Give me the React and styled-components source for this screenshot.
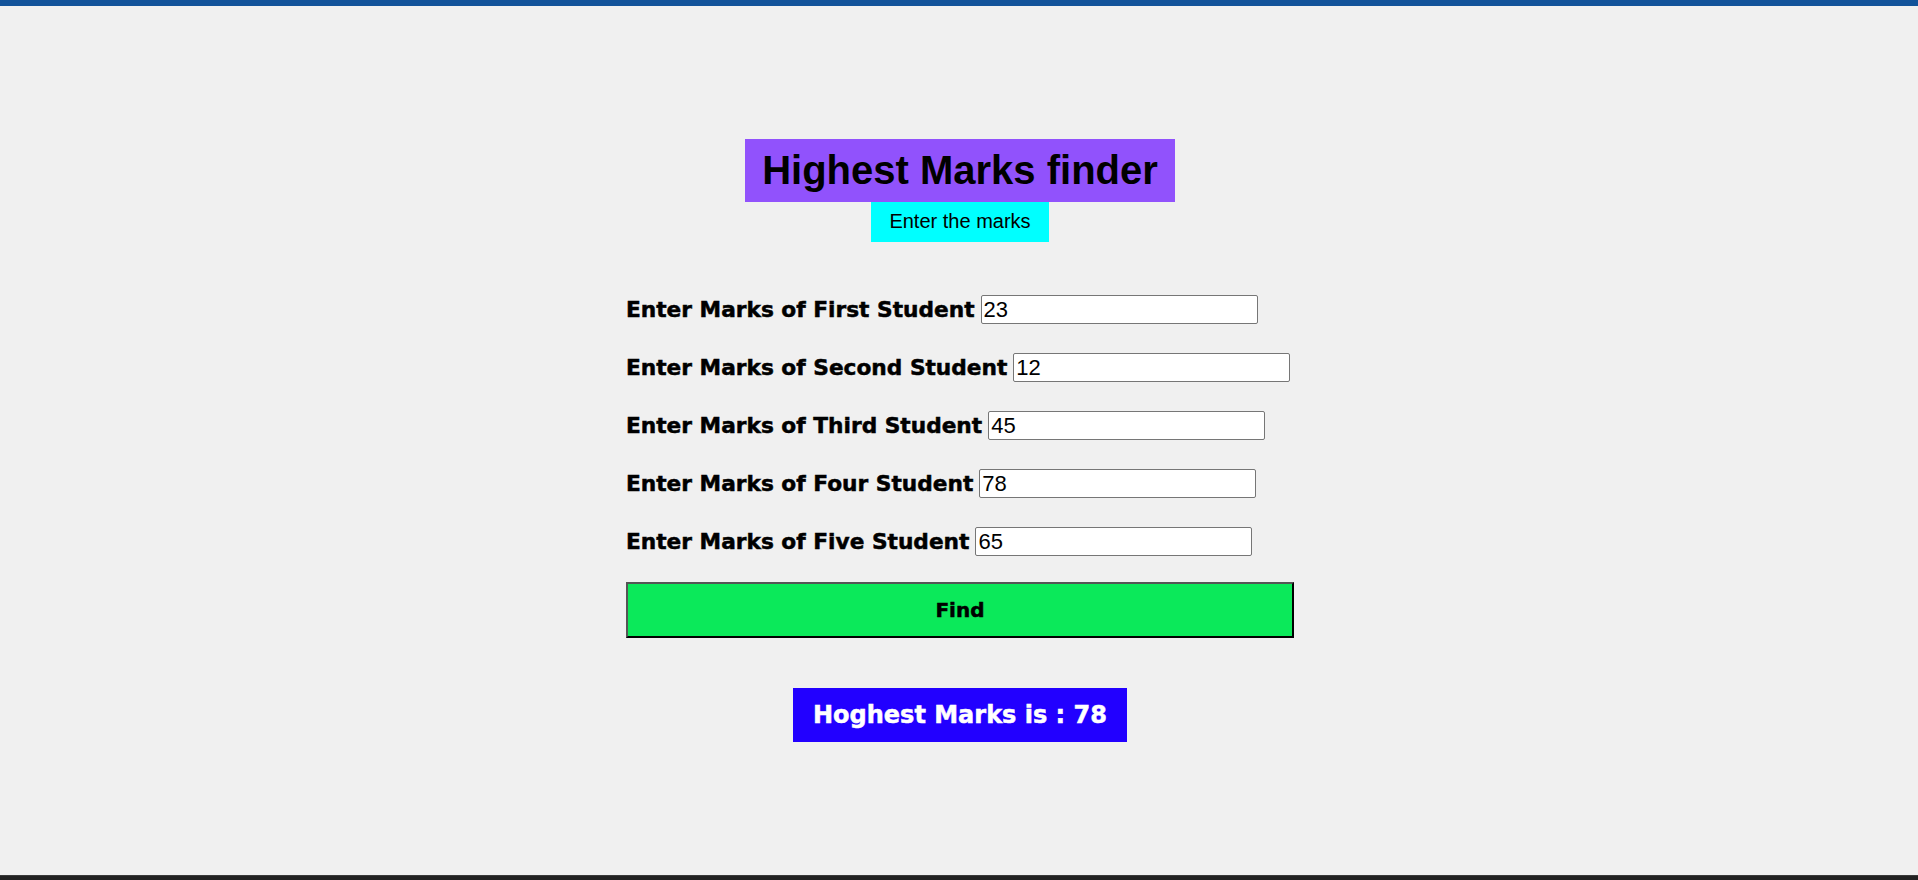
import React, { useState } from 'react';
import styled, { createGlobalStyle } from 'styled-components';

const GlobalStyle = createGlobalStyle`
  html, body {
    margin: 0;
    padding: 0;
    background-color: #f0f0f0;
  }
`;

const Page = styled.div`
  min-height: 100vh;
  display: flex;
  flex-direction: column;
  background-color: #f0f0f0;
`;

const TopBar = styled.div`
  height: 6px;
  background-color: #12539a;
`;

const BottomBar = styled.div`
  height: 4px;
  background-color: #222222;
  border-top: 1px solid #3a3a3a;
`;

const Main = styled.main`
  flex: 1;
  display: flex;
  flex-direction: column;
  align-items: center;
  padding-top: 133px;
  padding-left: 2px;
`;

const Title = styled.h1`
  margin: 0;
  padding: 8px 17px 9px;
  background-color: #9152fc;
  color: #000;
  font-family: 'Liberation Sans', Arial, sans-serif;
  font-size: 40px;
  font-weight: bold;
  line-height: 46px;
`;

const Subtitle = styled.p`
  margin: 0;
  padding: 8px 18px 9px;
  background-color: #00ffff;
  color: #000;
  font-family: 'Liberation Sans', Arial, sans-serif;
  font-size: 20px;
  line-height: 23px;
`;

const Form = styled.form`
  width: 668px;
  margin-top: 53px;
  display: flex;
  flex-direction: column;
`;

const Fields = styled.div`
  display: flex;
  flex-direction: column;
  gap: 29px;
`;

const Row = styled.div`
  display: flex;
  align-items: center;
  gap: 6px;
`;

const Heavy = `
  font-family: 'DejaVu Sans', sans-serif;
  font-weight: bold;
  -webkit-text-stroke: 0.5px currentColor;
`;

const Label = styled.label`
  ${Heavy}
  font-size: 21.7px;
  color: #000;
  white-space: nowrap;
`;

const Input = styled.input`
  box-sizing: border-box;
  width: 277px;
  height: 29px;
  padding: 1px 2px;
  border: 1px solid #767676;
  border-radius: 2px;
  background: #fff;
  font-family: 'Liberation Sans', Arial, sans-serif;
  font-size: 22px;
  color: #000;
  outline: none;
`;

const FindButton = styled.button`
  ${Heavy}
  box-sizing: border-box;
  margin-top: 26px;
  width: 100%;
  height: 56px;
  background-color: #0be95a;
  border-style: solid;
  border-width: 2px;
  border-color: #555555 #000000 #000000 #555555;
  font-size: 20px;
  color: #000;
  cursor: pointer;
`;

const Result = styled.div`
  ${Heavy}
  margin-top: 50px;
  padding: 13px 20px;
  background-color: #2200ff;
  color: #fff;
  font-size: 24px;
  line-height: 28px;
`;

const students = ['First', 'Second', 'Third', 'Four', 'Five'];

const App = () => {
  const [marks, setMarks] = useState(['23', '12', '45', '78', '65']);
  const [highest, setHighest] = useState(78);

  const handleChange = (index, value) => {
    const next = [...marks];
    next[index] = value;
    setMarks(next);
  };

  const handleFind = (e) => {
    e.preventDefault();
    const nums = marks.map((m) => Number(m) || 0);
    setHighest(Math.max(...nums));
  };

  return (
    <>
      <GlobalStyle />
      <Page>
        <TopBar />
        <Main>
          <Title>Highest Marks finder</Title>
          <Subtitle>Enter the marks</Subtitle>
          <Form onSubmit={handleFind}>
            <Fields>
              {students.map((name, index) => (
                <Row key={name}>
                  <Label htmlFor={`marks-${index}`}>Enter Marks of {name} Student</Label>
                  <Input
                    id={`marks-${index}`}
                    type="text"
                    value={marks[index]}
                    onChange={(e) => handleChange(index, e.target.value)}
                  />
                </Row>
              ))}
            </Fields>
            <FindButton type="submit">Find</FindButton>
          </Form>
          <Result>Hoghest Marks is : {highest}</Result>
        </Main>
        <BottomBar />
      </Page>
    </>
  );
};

export default App;
